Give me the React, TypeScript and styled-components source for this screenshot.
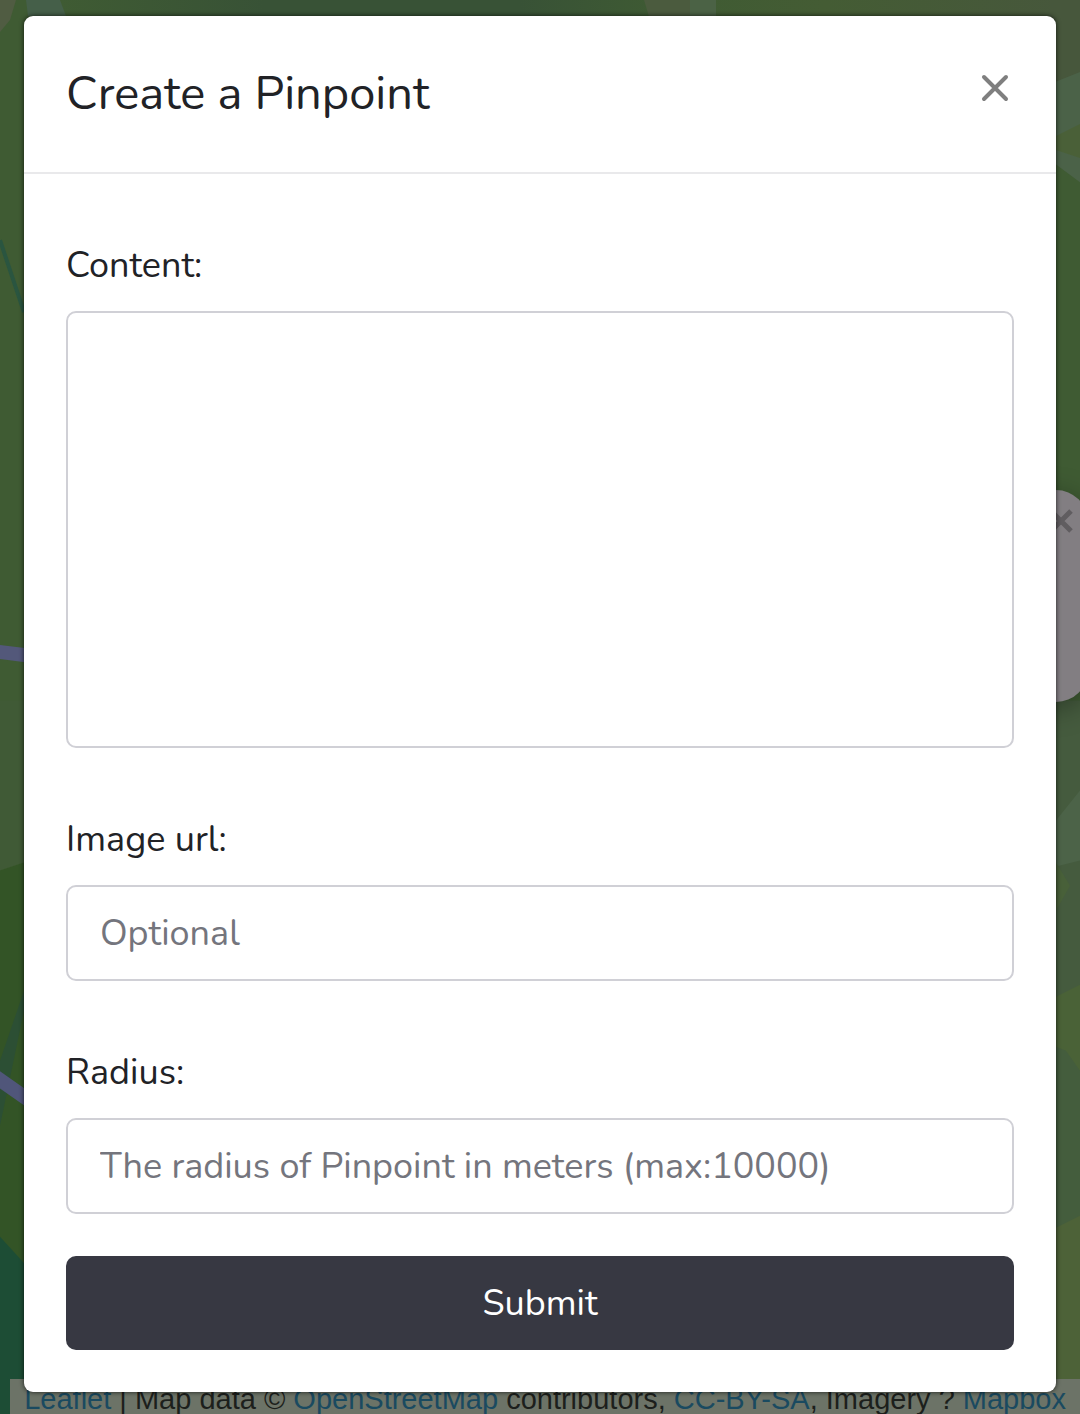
import React from "react";
import styled, { createGlobalStyle } from "styled-components";

const Global = createGlobalStyle`
  *, *::before, *::after { box-sizing: border-box; }
  body { margin: 0; background: #3f5b33; }
  body, input, textarea, button { font-family: Nunito, "Open Sans", "Noto Sans", sans-serif; }
`;

const Page = styled.div`
  position: relative;
  min-height: 100vh;
  padding: 16px 24px 23px;
  overflow: hidden;
`;

const MapCanvas = styled.svg`
  position: absolute;
  inset: 0;
  width: 100%;
  height: 100%;
`;

const Popup = styled.div`
  position: absolute;
  top: 490px;
  right: -8px;
  width: 110px;
  height: 212px;
  border-radius: 32px;
  background: #827e82;
  box-shadow: 0 6px 28px rgba(0, 0, 0, 0.35);
`;

const PopupMark = styled.svg`
  position: absolute;
  top: 18px;
  right: 14px;
  width: 26px;
  height: 26px;
`;

const Attribution = styled.footer`
  position: absolute;
  right: 0;
  bottom: -4px;
  padding: 0 14px;
  font: 29px/40px "Liberation Sans", Arial, sans-serif;
  white-space: nowrap;
  color: #1c1f1c;
  background: #6c7367;
`;

const MapLink = styled.a`
  color: #1a4a60;
  text-decoration: none;
`;

const Dialog = styled.section`
  position: relative;
  border-radius: 9px;
  background: #fff;
  box-shadow: 0 0 5px rgba(0, 0, 0, 0.75);
`;

const Header = styled.header`
  display: flex;
  align-items: flex-start;
  justify-content: space-between;
  padding: 42px;
  border-bottom: 2px solid #e9e9eb;
`;

const Title = styled.h1`
  margin: 0;
  font-size: 47px;
  line-height: 72px;
  font-weight: 400;
  color: #212226;
`;

const Close = styled.button`
  display: flex;
  align-items: center;
  justify-content: center;
  width: 38px;
  height: 60px;
  padding: 0;
  border: 0;
  background: none;
  color: #7f7f7f;
  cursor: pointer;
`;

const Form = styled.form`
  padding: 42px;
`;

const Field = styled.div`
  display: flex;
  flex-direction: column;
  gap: 18px;
  padding-top: 23px;
  margin-bottom: 42px;
`;

const Label = styled.label`
  font-size: 36px;
  line-height: 54px;
  color: #212226;
`;

const Input = styled.input`
  width: 100%;
  height: 96px;
  padding: 0 32px;
  border: 2px solid #d0d0d6;
  border-radius: 10px;
  font-size: 36px;
  color: #212226;
  background: #fff;
  &::placeholder { color: #74757d; opacity: 1; }
`;

const TextArea = styled.textarea`
  width: 100%;
  height: 437px;
  padding: 20px 32px;
  border: 2px solid #d0d0d6;
  border-radius: 10px;
  font-size: 36px;
  background: #fff;
  resize: none;
`;

const Submit = styled.button`
  display: block;
  width: 100%;
  height: 94px;
  border: 0;
  border-radius: 10px;
  font-size: 36px;
  color: #fff;
  background: #373842;
  cursor: pointer;
`;

function MapBackground() {
  return (
    <MapCanvas viewBox="0 0 1080 1414" preserveAspectRatio="none" aria-hidden="true">
      <defs>
        <linearGradient id="ridge" x1="0" x2="1" y1="0" y2="0">
          <stop offset="0" stopColor="#3f5b33" />
          <stop offset="0.2" stopColor="#385236" />
          <stop offset="0.45" stopColor="#385236" />
          <stop offset="0.6" stopColor="#3f5b33" />
          <stop offset="0.75" stopColor="#445c34" />
          <stop offset="1" stopColor="#47573c" />
        </linearGradient>
      </defs>
      <rect width="1080" height="1414" fill="#3f5b33" />
      <path d="M60 0H1080V20H60Z" fill="url(#ridge)" />
      <path d="M0 0H16L10 20L0 32Z" fill="#505c42" />
      <path d="M26 0H60L66 16H28Z" fill="#455f49" />
      <path d="M644 0H690V20H650Z" fill="#4b5b3e" />
      <path d="M690 0H716V20H690Z" fill="#4b6245" />
      <path d="M1050 0H1080V176L1050 150Z" fill="#47573c" />
      <path d="M1050 84L1080 72V182L1050 160Z" fill="#4b6248" />
      <path d="M1056 136L1080 124V158L1056 150Z" fill="#4a6038" />
      <path d="M0 240L24 312" stroke="#2a5540" strokeWidth="4" />
      <path d="M-4 651L28 655" stroke="#53587a" strokeWidth="14" />
      <path d="M0 700H24V862L0 870Z" fill="#405a36" />
      <path d="M0 870L24 862V1262L0 1240Z" fill="#335426" />
      <path d="M24 990L0 1060V1125L24 1010Z" fill="#2c4f34" />
      <path d="M-10 1072L34 1103" stroke="#50567a" strokeWidth="14" />
      <path d="M0 1236L24 1262V1414H0Z" fill="#1d4d35" />
      <path d="M1050 700H1080V1010L1050 1040Z" fill="#455b3e" />
      <path d="M1056 820L1080 790V860L1056 866Z" fill="#4c6348" />
      <path d="M1056 862L1070 885L1056 910Z" fill="#486039" />
      <path d="M1050 1000L1080 985V1414H1050Z" fill="#445d3d" />
      <path d="M1056 996L1080 984V1070L1066 1050L1056 1046Z" fill="#4a6237" />
      <path d="M1050 1230L1080 1215V1414H1050Z" fill="#4d6238" />
    </MapCanvas>
  );
}

export default function App() {
  return (
    <Page>
      <Global />
      <MapBackground />
      <Popup>
        <PopupMark viewBox="0 0 26 26" aria-hidden="true">
          <path d="M3 3L23 23M23 3L3 23" stroke="#605d60" strokeWidth="5" />
        </PopupMark>
      </Popup>
      <Attribution>
        <MapLink href="#leaflet">Leaflet</MapLink> | Map data © <MapLink href="#osm">OpenStreetMap</MapLink>
        {" contributors, "}
        <MapLink href="#license">CC-BY-SA</MapLink>, Imagery ? <MapLink href="#mapbox">Mapbox</MapLink>
      </Attribution>
      <Dialog role="dialog" aria-labelledby="dialog-title">
        <Header>
          <Title id="dialog-title">Create a Pinpoint</Title>
          <Close type="button" aria-label="Close">
            <svg width="28" height="28" viewBox="0 0 28 28" fill="none" stroke="currentColor" strokeWidth="4" strokeLinecap="round" aria-hidden="true">
              <path d="M3 3L25 25M25 3L3 25" />
            </svg>
          </Close>
        </Header>
        <Form onSubmit={(event) => event.preventDefault()}>
          <Field>
            <Label htmlFor="content">Content:</Label>
            <TextArea id="content" />
          </Field>
          <Field>
            <Label htmlFor="image-url">Image url:</Label>
            <Input id="image-url" type="text" placeholder="Optional" />
          </Field>
          <Field>
            <Label htmlFor="radius">Radius:</Label>
            <Input id="radius" type="text" inputMode="numeric" placeholder="The radius of Pinpoint in meters (max:10000)" />
          </Field>
          <Submit type="submit">Submit</Submit>
        </Form>
      </Dialog>
    </Page>
  );
}
